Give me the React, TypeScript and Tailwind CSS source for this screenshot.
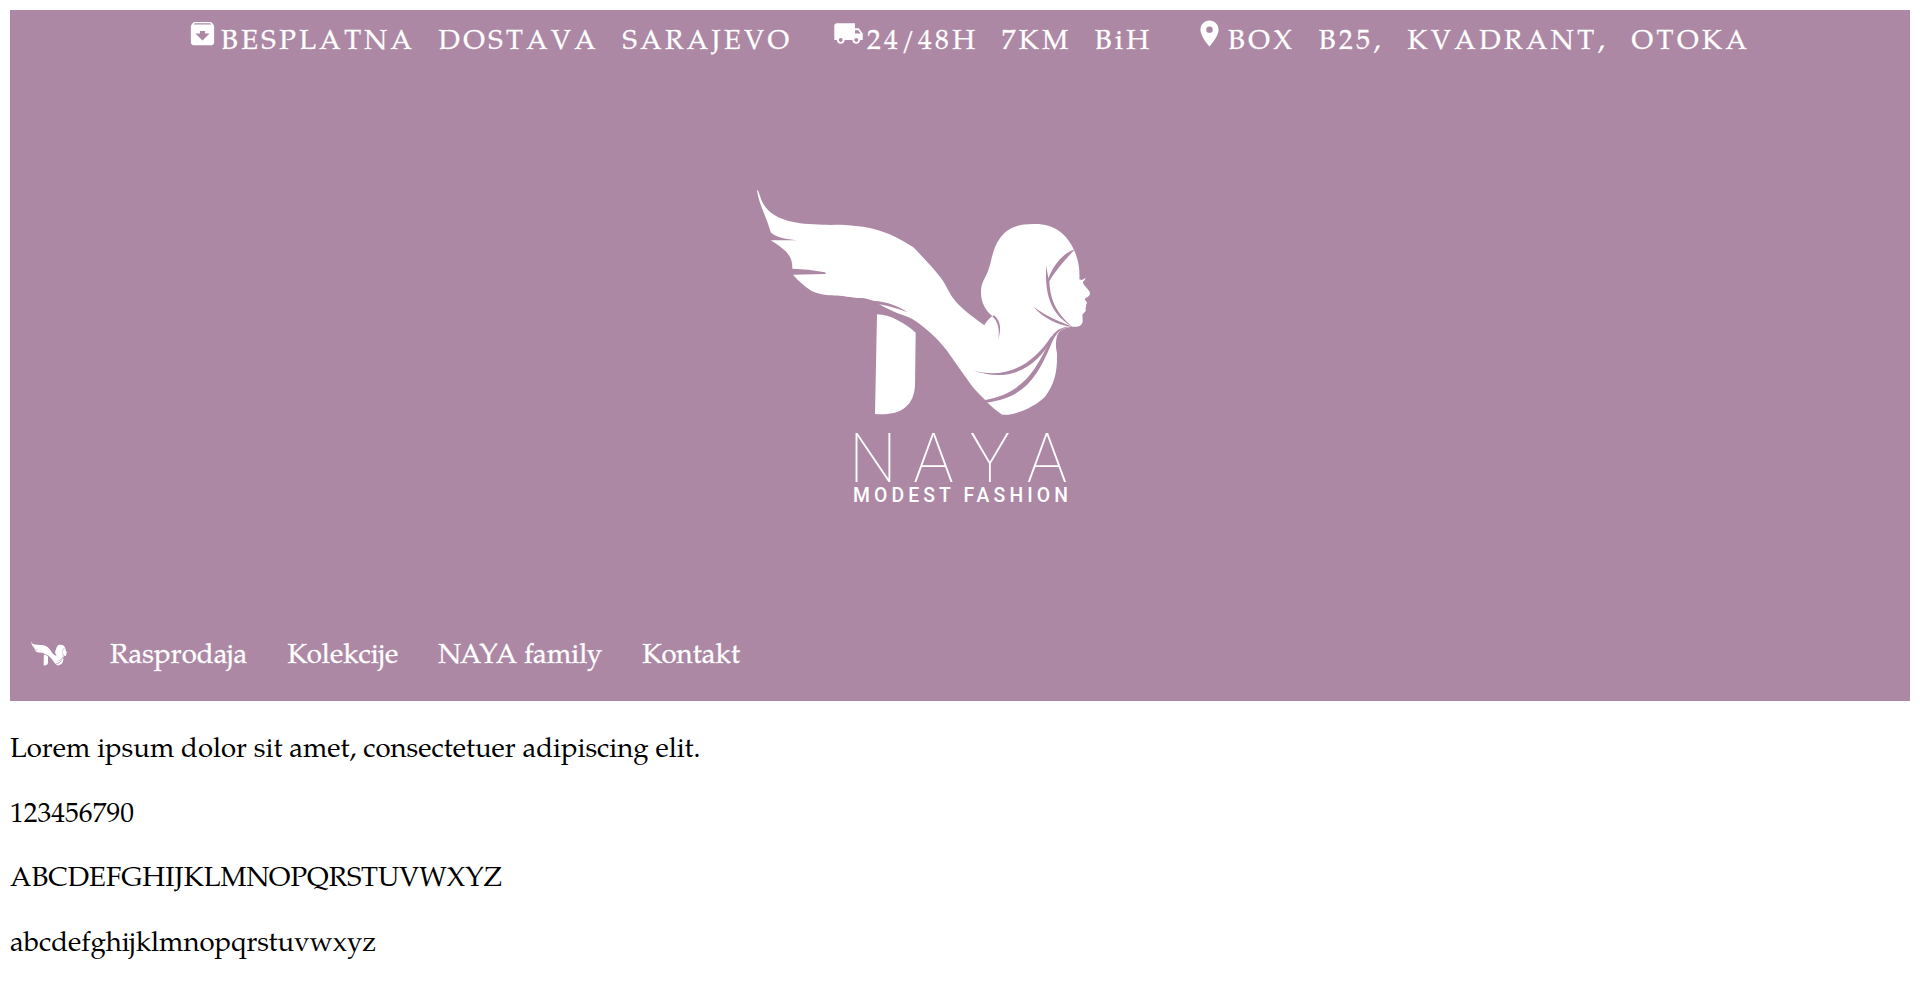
import { MdArchive, MdLocalShipping, MdLocationOn } from "react-icons/md";

const links = ["Rasprodaja", "Kolekcije", "NAYA family", "Kontakt"];

const paragraphs = [
  "Lorem ipsum dolor sit amet, consectetuer adipiscing elit.",
  "123456790",
  "ABCDEFGHIJKLMNOPQRSTUVWXYZ",
  "abcdefghijklmnopqrstuvwxyz",
];

function WingMark() {
  return (
    <>
      <path
        fill="#fff"
        d="M51 60C54 59 57 68 60 78C78 140 140 160 220 163C285 167 290 162 340 167C420 172 480 205 520 232C548 260 576 291 600 320C618 343 624 362 639 384C662 416 692 435 733 466C738 455 746 447 757 438C735 420 723 395 723 368C723 335 737 325 745 300C756 270 757 235 780 205C800 175 830 162 880 162C940 160 980 190 1002 240C1014 265 1020 295 1018 328L1024 330Q1031 329 1037 323Q1036 331 1028 336C1030 345 1040 352 1048 364Q1053 374 1044 380Q1038 383 1034 387Q1036 391 1040 396Q1042 401 1038 405Q1040 410 1036 415Q1040 422 1034 427C1024 434 1028 437 1028 448C1030 465 1018 473 995 470C972 473 955 480 950 502C946 525 948 535 951 550C952 605 945 640 915 680C885 710 825 738 787 734C770 722 752 708 740 695C720 675 700 655 690 640C670 612 650 583 630 555C605 518 570 485 540 463C525 452 510 442 490 436C465 428 440 415 417 403C450 408 475 418 502 426C475 408 445 396 400 392C385 388 378 385 365 384C350 385 335 380 320 380C305 376 280 378 260 375C245 373 228 370 215 363C192 348 175 332 159 314L255 312Q260 310 255 307C220 300 190 297 157 296C157 262 147 245 92 211L170 211C140 207 110 205 92 187C80 140 55 100 51 60Z"
      />
      <path fill="#fff" d="M411 433C450 433 495 460 527 488L525 645C522 710 480 738 405 732Z" />
      <g fill="#ac88a4">
        <path d="M1003 239C972 246 934 290 922 336L928 334C944 304 980 265 1003 239Z" />
        <path d="M919 286C914 360 925 430 998 471C948 428 931 390 928 335C924 320 921 303 919 286Z" />
        <path d="M881 410C905 440 950 466 998 470C962 456 920 440 881 410Z" />
        <path d="M757 439C775 455 779 480 775 507C784 480 783 452 762 436Z" />
        <path d="M697 600C790 630 875 590 933 500L940 499C890 600 800 640 697 600Z" />
        <path d="M731 691C850 670 885 600 922 528C934 497 948 471 995 469C955 475 943 498 930 532C895 610 860 684 738 698Z" />
      </g>
    </>
  );
}

function Logo() {
  return (
    <svg viewBox="0 0 1080 1020" className="h-[340px] w-[360px]" role="img" aria-label="NAYA Modest Fashion">
      <WingMark />
      <text
        x="327 520 689 860"
        y="937"
        fill="#fff"
        className="font-[Roboto,sans-serif] text-[203px] font-thin"
      >
        NAYA
      </text>
      <text
        x="339"
        y="995"
        fill="#fff"
        textLength="645"
        className="font-[Roboto,sans-serif] text-[58px] font-medium"
      >
        MODEST FASHION
      </text>
    </svg>
  );
}

export default function App() {
  return (
    <div className="min-h-[996px] bg-white p-[10px] font-['TeX_Gyre_Pagella','Palatino_Linotype','Liberation_Serif',serif] text-[27.55px] leading-[37px] text-black">
      <header className="flex h-[691px] flex-col bg-[#ac88a4] text-white [-webkit-text-stroke:0.3px_white]">
        <div className="flex h-[60px] items-start pt-[8px] pl-[177px] tracking-[3.35px] whitespace-nowrap [font-kerning:none] [word-spacing:13px]">
          <div className="flex w-[646px]">
            <MdArchive className="mr-[3px] size-[31px]" />
            <span className="pt-[7px]">BESPLATNA DOSTAVA SARAJEVO</span>
          </div>
          <div className="flex w-[361px]">
            <MdLocalShipping className="mr-[3px] size-[31px]" />
            <span className="pt-[7px]">24/48H 7KM BiH</span>
          </div>
          <div className="flex">
            <MdLocationOn className="mr-[3px] size-[31px]" />
            <span className="pt-[7px] tracking-[3.5px]">BOX B25, KVADRANT, OTOKA</span>
          </div>
        </div>
        <div className="pt-[100px] pl-[730px] [-webkit-text-stroke:0]">
          <Logo />
        </div>
        <nav className="mt-auto flex h-[87px] items-center gap-10 pl-[19px] tracking-[0.08px]">
          <a href="#" className="block w-[41px] pb-[10px]">
            <svg viewBox="0 0 1080 760" className="h-[27.4px] w-[39px]" role="img" aria-label="NAYA">
              <WingMark />
            </svg>
          </a>
          {links.map((label) => (
            <a key={label} href="#">
              {label}
            </a>
          ))}
        </nav>
      </header>
      <main className="flex flex-col gap-[27.5px] pt-[32px]">
        {paragraphs.map((text) => (
          <p key={text}>{text}</p>
        ))}
      </main>
    </div>
  );
}
